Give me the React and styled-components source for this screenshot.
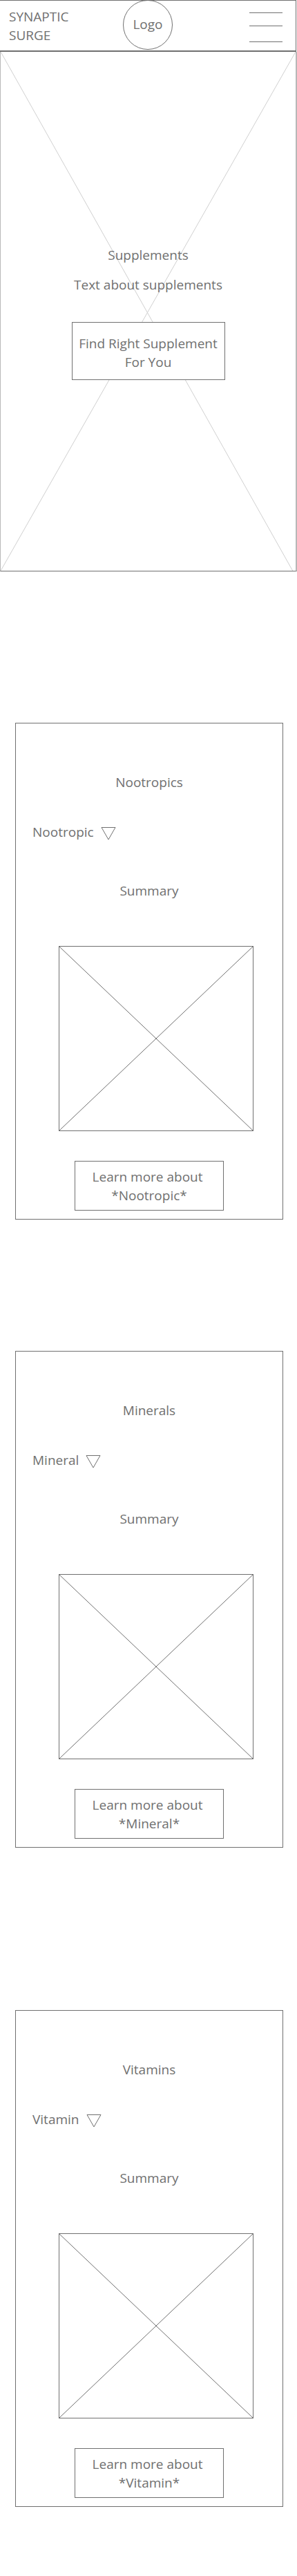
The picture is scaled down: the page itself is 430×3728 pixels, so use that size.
import React from "react";
import styled, { createGlobalStyle } from "styled-components";

const ink = "#707070";

const GlobalStyle = createGlobalStyle`
  *, *::before, *::after { box-sizing: border-box; }
  body {
    margin: 0;
    background: #fff;
    color: ${ink};
    font: 400 19px/27px "Open Sans", "Noto Sans", sans-serif;
  }
`;

const Page = styled.div`
  display: flex;
  flex-direction: column;
  padding-bottom: 100px;
`;

const Header = styled.header`
  display: grid;
  grid-template-columns: 1fr auto 1fr;
  margin-right: 1px;
  border: solid ${ink};
  border-width: 1px 1px 2px 0;
`;

const Brand = styled.a`
  width: min-content;
  padding: 10px 0 8px 13px;
  color: inherit;
  text-decoration: none;
`;

const Logo = styled.a`
  display: flex;
  align-items: center;
  justify-content: center;
  width: 72px;
  height: 72px;
  margin-top: -1px;
  padding-bottom: 2px;
  border: 1px solid ${ink};
  border-radius: 50%;
  color: inherit;
  text-decoration: none;
`;

const MenuButton = styled.button`
  display: flex;
  flex-direction: column;
  justify-self: end;
  align-self: start;
  width: 48px;
  margin: 17px 19px 0 0;
  padding: 0;
  border: 0;
  background: none;
  cursor: pointer;
`;

const MenuLine = styled.span`
  width: 100%;
  height: 1px;
  background: ${ink};

  &:nth-child(2) { margin: 18px 0 22px; }
`;

const Hero = styled.section`
  position: relative;
  display: flex;
  flex-direction: column;
  align-items: center;
  padding: 281px 16px 276px;
  border: solid #b8b8b8;
  border-width: 0 2px 0 1px;
  border-bottom: 1px solid ${ink};
  text-align: center;
`;

const Backdrop = styled.svg`
  position: absolute;
  inset: 0;
  width: 100%;
  height: 100%;
  stroke: #d0d0d0;
`;

const Title = styled.h2`
  margin: 0;
  font: inherit;
`;

const Text = styled.p`
  margin: 0;
`;

const HeroCopy = styled.div`
  position: relative;
  display: grid;
  gap: 16px;
  margin-bottom: 40px;
`;

const ActionButton = styled.button`
  position: relative;
  width: ${(p) => (p.$large ? 222 : 216)}px;
  padding: ${(p) => (p.$large ? "17px 0 11px" : "9px 0 7px")};
  border: 1px solid ${ink};
  border-radius: 0;
  background: #fff;
  color: inherit;
  font: inherit;
  cursor: pointer;
`;

const Card = styled.section`
  display: flex;
  flex-direction: column;
  align-items: center;
  margin: ${(p) => p.$space}px 20px 0 22px;
  padding: 72px 24px 12px;
  border: 1px solid ${ink};
`;

const Picker = styled.label`
  display: grid;
  align-self: flex-start;
  margin: 45px 0 58px;

  > * { grid-area: 1 / 1; }

  svg {
    align-self: end;
    justify-self: end;
    pointer-events: none;
  }
`;

const PickerSelect = styled.select`
  appearance: none;
  field-sizing: content;
  height: 27px;
  margin: 0;
  padding: 0 32px 0 0;
  border: 0;
  background: none;
  color: inherit;
  font: inherit;
  cursor: pointer;
`;

const Picture = styled.svg`
  width: 282px;
  height: 268px;
  margin: 66px 0 43px 20px;
  border: 1px solid ${ink};
  stroke: ${ink};
`;

const sections = [
  { title: "Nootropics", item: "Nootropic", space: 219 },
  { title: "Minerals", item: "Mineral", space: 190 },
  { title: "Vitamins", item: "Vitamin", space: 235 },
];

function Supplement({ title, item, space }) {
  return (
    <Card $space={space}>
      <Title>{title}</Title>
      <Picker>
        <PickerSelect aria-label={item}>
          <option>{item}</option>
        </PickerSelect>
        <svg width="22" height="21" fill="none" stroke={ink} aria-hidden="true">
          <path d="M1 .5H21L11 18Z" />
        </svg>
      </Picker>
      <Text>Summary</Text>
      <Picture role="img" aria-label={title}>
        <line x1="0" y1="0" x2="100%" y2="100%" />
        <line x1="100%" y1="0" x2="0" y2="100%" />
      </Picture>
      <ActionButton>
        Learn more about&nbsp;
        <br />*{item}*
      </ActionButton>
    </Card>
  );
}

export default function App() {
  return (
    <>
      <GlobalStyle />
      <Page>
        <Header>
          <Brand href="#">SYNAPTIC SURGE</Brand>
          <Logo href="#">Logo</Logo>
          <MenuButton aria-label="Menu">
            <MenuLine />
            <MenuLine />
            <MenuLine />
          </MenuButton>
        </Header>
        <main>
          <Hero>
            <Backdrop aria-hidden="true">
              <line x1="0" y1="0" x2="99%" y2="100%" />
              <line x1="100%" y1="0" x2="0" y2="100%" />
            </Backdrop>
            <HeroCopy>
              <Title>Supplements</Title>
              <Text>Text about supplements</Text>
            </HeroCopy>
            <ActionButton $large>
              Find Right Supplement
              <br />
              For You
            </ActionButton>
          </Hero>
          {sections.map((s) => (
            <Supplement key={s.title} {...s} />
          ))}
        </main>
      </Page>
    </>
  );
}
